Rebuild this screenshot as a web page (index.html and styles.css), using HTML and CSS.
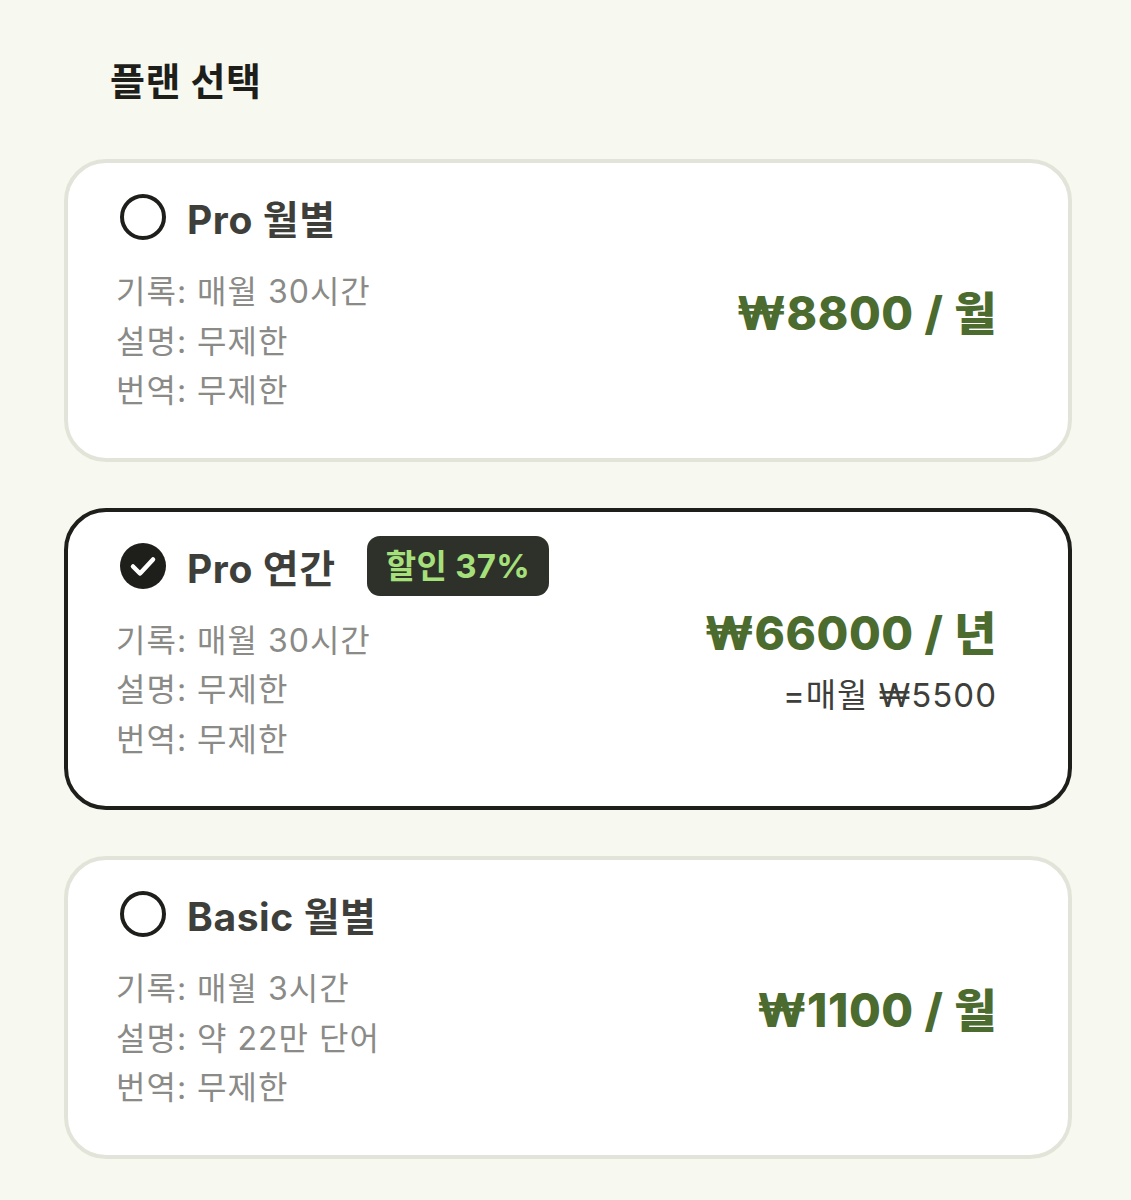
FILE: index.html
```html
<!DOCTYPE html>
<html lang="ko">
<head>
	<meta charset="UTF-8">
	<title>플랜 선택</title>
	<link rel="stylesheet" href="styles.css">
</head>
<body>
	<div class="page">
		<h1 class="heading">플랜 선택</h1>

		<div class="plans">
			<div class="plan">
				<div class="plan-info">
					<div class="plan-title">
						<span class="radio"></span>
						<span class="plan-name">Pro 월별</span>
					</div>
					<ul class="plan-details">
						<li>기록: 매월 30시간</li>
						<li>설명: 무제한</li>
						<li>번역: 무제한</li>
					</ul>
				</div>
				<div class="plan-price">
					<div class="price">₩8800 / 월</div>
				</div>
			</div>

			<div class="plan on">
				<div class="plan-info">
					<div class="plan-title">
						<span class="radio">
							<svg viewBox="0 0 46 46" width="46" height="46">
								<path d="M13 23.5 L20 30.5 L33 16.5" fill="none" stroke="#fff" stroke-width="4.5" stroke-linecap="round" stroke-linejoin="round"/>
							</svg>
						</span>
						<span class="plan-name">Pro 연간</span>
						<span class="badge">할인 37%</span>
					</div>
					<ul class="plan-details">
						<li>기록: 매월 30시간</li>
						<li>설명: 무제한</li>
						<li>번역: 무제한</li>
					</ul>
				</div>
				<div class="plan-price">
					<div class="price">₩66000 / 년</div>
					<div class="price-sub">=매월 ₩5500</div>
				</div>
			</div>

			<div class="plan">
				<div class="plan-info">
					<div class="plan-title">
						<span class="radio"></span>
						<span class="plan-name">Basic 월별</span>
					</div>
					<ul class="plan-details">
						<li>기록: 매월 3시간</li>
						<li>설명: 약 22만 단어</li>
						<li>번역: 무제한</li>
					</ul>
				</div>
				<div class="plan-price">
					<div class="price">₩1100 / 월</div>
				</div>
			</div>
		</div>
	</div>
</body>
</html>
```

FILE: styles.css
```css
html, body {
	margin: 0;
	padding: 0;
}
body {
	background: #f7f8ef;
	font-family: Inter, "Noto Sans CJK KR", sans-serif;
	color: #1e1f1b;
}
.page {
	padding: 55px 59px 40px 64px;
}
.heading {
	margin: 0 0 52px 46px;
	font-size: 38px;
	font-weight: 700;
	line-height: 52px;
	letter-spacing: 0.5px;
	color: #1e1f1b;
}
.plans {
	display: flex;
	flex-direction: column;
	gap: 46px;
}
.plan {
	display: flex;
	justify-content: space-between;
	align-items: center;
	background: #fff;
	border: 4px solid #e3e4d9;
	border-radius: 42px;
	padding: 24px 71px 24px 48px;
}
.plan.on {
	border-color: #1e1f1b;
}
.plan-info {
	padding-bottom: 18px;
}
.plan-title {
	display: flex;
	align-items: center;
	height: 60px;
	margin-bottom: 20px;
}
.radio {
	display: inline-block;
	box-sizing: border-box;
	width: 46px;
	height: 46px;
	border: 4px solid #1e1f1b;
	border-radius: 50%;
	margin: 0 21px 0 4px;
}
.plan.on .radio {
	background: #1e1f1b;
	border: none;
}
.radio svg {
	display: block;
}
.plan-name {
	font-size: 39px;
	font-weight: 700;
	letter-spacing: 0.6px;
	color: #3e3f3a;
}
.badge {
	margin-left: 31px;
	padding: 0 19px;
	height: 60px;
	line-height: 60px;
	background: #2e302a;
	border-radius: 13px;
	color: #a6e07b;
	font-size: 33px;
	font-weight: 700;
	letter-spacing: 0.3px;
}
.plan-details {
	list-style: none;
	margin: 0;
	padding: 0;
}
.plan-details li {
	font-size: 32px;
	line-height: 49.5px;
	letter-spacing: 1px;
	color: #8a8a87;
}
.plan-price {
	padding-top: 5px;
	text-align: right;
}
.price {
	font-size: 46px;
	font-weight: 800;
	letter-spacing: 0.6px;
	color: #4b6b2f;
	line-height: 56px;
}
.price-sub {
	margin-top: 12px;
	font-size: 33px;
	line-height: 44px;
	letter-spacing: 1px;
	color: #3e3f3a;
}
```
